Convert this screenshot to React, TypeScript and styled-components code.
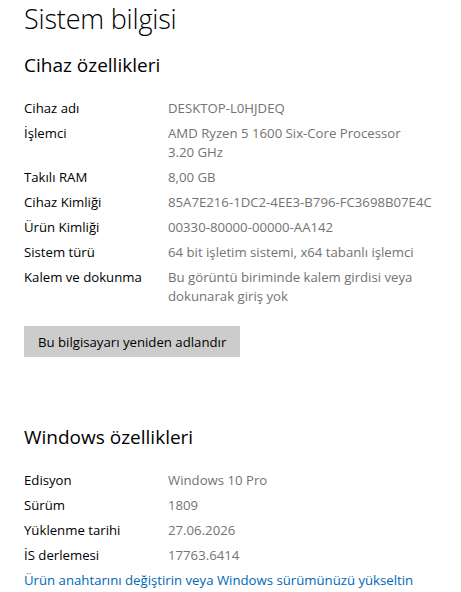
import React from 'react'
import styled, { createGlobalStyle } from 'styled-components'

const GlobalStyle = createGlobalStyle`
  html, body {
    margin: 0;
    padding: 0;
    background: #ffffff;
  }
  body {
    font-family: "Open Sans", "Noto Sans", "Liberation Sans", sans-serif;
  }
`

type Spec = { label: string; value: string[] }

const deviceSpecs: Spec[] = [
  { label: 'Cihaz adı', value: ['DESKTOP-L0HJDEQ'] },
  { label: 'İşlemci', value: ['AMD Ryzen 5 1600 Six-Core Processor', '3.20 GHz'] },
  { label: 'Takılı RAM', value: ['8,00 GB'] },
  { label: 'Cihaz Kimliği', value: ['85A7E216-1DC2-4EE3-B796-FC3698B07E4C'] },
  { label: 'Ürün Kimliği', value: ['00330-80000-00000-AA142'] },
  { label: 'Sistem türü', value: ['64 bit işletim sistemi, x64 tabanlı işlemci'] },
  { label: 'Kalem ve dokunma', value: ['Bu görüntü biriminde kalem girdisi veya', 'dokunarak giriş yok'] },
]

const windowsSpecs: Spec[] = [
  { label: 'Edisyon', value: ['Windows 10 Pro'] },
  { label: 'Sürüm', value: ['1809'] },
  { label: 'Yüklenme tarihi', value: ['27.06.2026'] },
  { label: 'İS derlemesi', value: ['17763.6414'] },
]

const SpecList = ({ items }: { items: Spec[] }) => (
  <SpecTable>
    {items.map((s) => (
      <React.Fragment key={s.label}>
        <SpecLabel>{s.label}</SpecLabel>
        <SpecValue>
          {s.value.map((line) => (
            <div key={line}>{line}</div>
          ))}
        </SpecValue>
      </React.Fragment>
    ))}
  </SpecTable>
)

const App = () => {
  return (
    <>
      <GlobalStyle />
      <Page>
        <PageTitle>Sistem bilgisi</PageTitle>

        <SectionTitle>Cihaz özellikleri</SectionTitle>
        <SpecList items={deviceSpecs} />
        <RenameButton>Bu bilgisayarı yeniden adlandır</RenameButton>

        <SectionTitle $spaced>Windows özellikleri</SectionTitle>
        <SpecList items={windowsSpecs} />
        <UpgradeLink href="#">Ürün anahtarını değiştirin veya Windows sürümünüzü yükseltin</UpgradeLink>
      </Page>
    </>
  )
}

const Page = styled.div`
  padding: 0 0 0 24px;
  color: #000;
`

const PageTitle = styled.h1`
  margin: 0;
  font-size: 27px;
  font-weight: 300;
  line-height: 38px;
  letter-spacing: -0.2px;
`

const SectionTitle = styled.h2<{ $spaced?: boolean }>`
  margin: ${(p) => (p.$spaced ? '66px' : '13px')} 0 0;
  font-size: 19px;
  font-weight: 400;
  line-height: 28px;
`

const SpecTable = styled.div`
  display: grid;
  grid-template-columns: 144px 1fr;
  row-gap: 6px;
  margin-top: 20px;
  font-size: 13.2px;
  line-height: 19px;
`

const SpecLabel = styled.div`
  color: #000;
`

const SpecValue = styled.div`
  color: #737373;
`

const RenameButton = styled.button`
  display: block;
  margin-top: 20px;
  height: 31px;
  padding: 0 14px;
  border: none;
  background: #cccccc;
  color: #000;
  font-family: inherit;
  font-size: 13.2px;
`

const UpgradeLink = styled.a`
  display: block;
  margin-top: 6px;
  font-size: 13.2px;
  line-height: 19px;
  color: #0067b8;
  text-decoration: none;
`

export default App
